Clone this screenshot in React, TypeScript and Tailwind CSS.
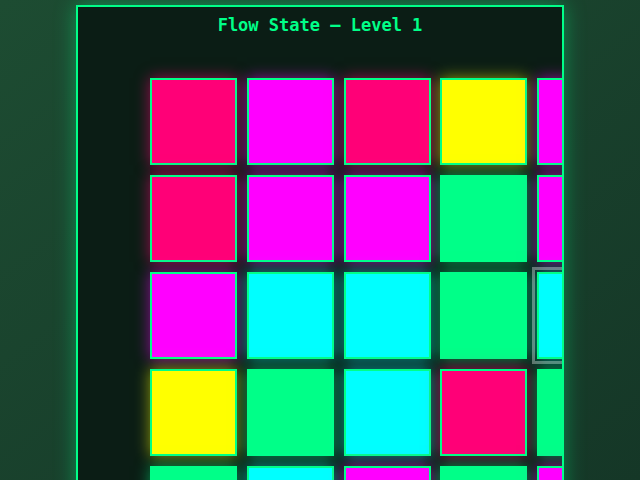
import React from 'react';

type Tile = 'pink' | 'magenta' | 'yellow' | 'green' | 'cyan';

const TILE_CLASSES: Record<Tile, string> = {
    pink: 'bg-[#ff0077] shadow-[0_0_14px_rgba(255,0,119,0.6)]',
    magenta: 'bg-[#ff00ff] shadow-[0_0_14px_rgba(255,0,255,0.55)]',
    yellow: 'bg-[#ffff00] shadow-[0_0_14px_rgba(255,255,0,0.55)]',
    green: 'bg-[#00ff88] shadow-[0_0_14px_rgba(0,255,136,0.5)]',
    cyan: 'bg-[#00ffff] shadow-[0_0_14px_rgba(0,255,255,0.5)]',
};

const BOARD: Tile[][] = [
    ['pink', 'magenta', 'pink', 'yellow', 'magenta', 'cyan'],
    ['pink', 'magenta', 'magenta', 'green', 'magenta', 'pink'],
    ['magenta', 'cyan', 'cyan', 'green', 'cyan', 'yellow'],
    ['yellow', 'green', 'cyan', 'pink', 'green', 'magenta'],
    ['green', 'cyan', 'magenta', 'green', 'magenta', 'green'],
];

const SELECTED = { row: 2, col: 4 };

const App: React.FC = () => {
    return (
        <div className="w-[640px] h-[480px] overflow-hidden flex justify-center bg-gradient-to-br from-[#1d4c32] to-[#153727]">
            <div className="w-[488px] h-[560px] mt-[5px] shrink-0 overflow-hidden border-2 border-[#00ff88] bg-[#0b1d15] shadow-[0_0_20px_rgba(0,255,136,0.4)] flex flex-col">
                <h1 className="pt-[8px] text-center text-[17px] leading-[20px] font-bold text-[#00ff88] font-['DejaVu_Sans_Mono',monospace]">
                    Flow State — Level 1
                </h1>
                <div className="mt-[43px] pl-[72px] flex flex-col gap-[10px]">
                    {BOARD.map((row, r) => (
                        <div key={r} className="flex gap-[9.75px]">
                            {row.map((tile, c) => {
                                const selected = r === SELECTED.row && c === SELECTED.col;
                                return (
                                    <div
                                        key={c}
                                        className={`w-[87px] h-[87px] shrink-0 border-2 border-[#00ff88] ${TILE_CLASSES[tile]} ${
                                            selected ? 'outline-3 outline-offset-2 outline-white/35' : ''
                                        }`}
                                    />
                                );
                            })}
                        </div>
                    ))}
                </div>
            </div>
        </div>
    );
};

export default App;
